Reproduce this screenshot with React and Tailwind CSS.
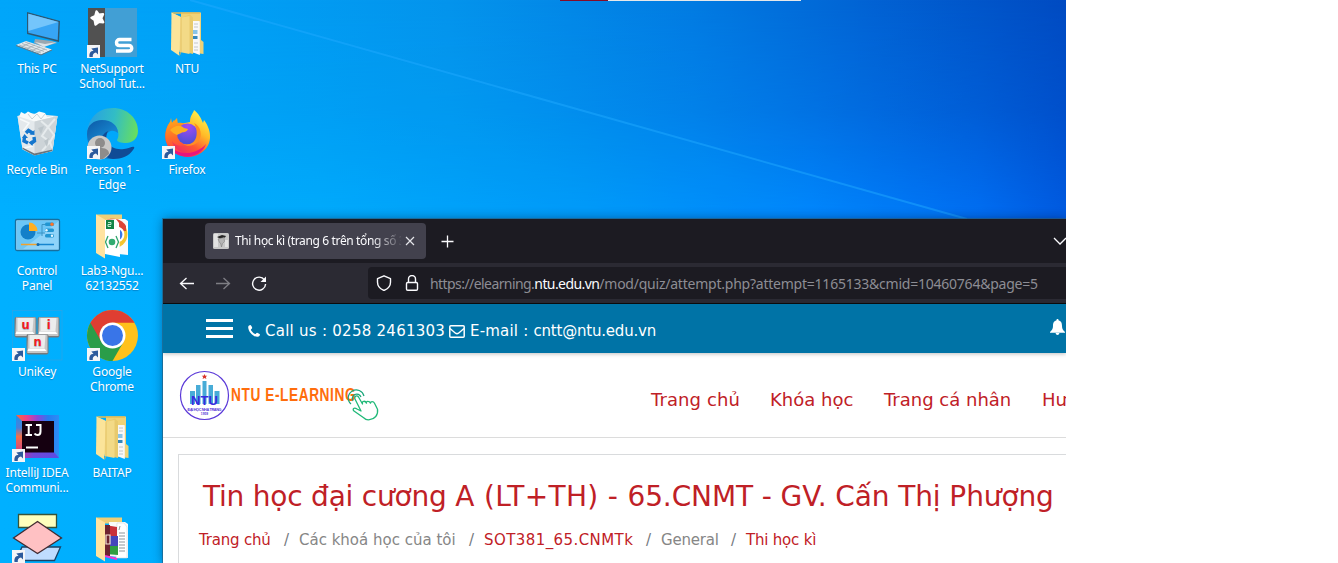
import React from "react";

function Badge() {
  return (
    <g>
      <rect x="12" y="45" width="13" height="13" fill="#f4f5f7" />
      <path d="M14.500 57C14 53 15.500 51 18.500 50.700L16.300 48.500l6.700-1v7l-2-1.900C18.500 53 17.500 54.500 17.800 57z" fill="#2c5a9c" />
    </g>
  );
}

function Icon({ children }) {
  return <svg className="block h-[61px] w-[75px]" viewBox="0 0 75 61">{children}</svg>;
}

function ThisPC() {
  return (
    <Icon>
      <path d="M35 39l17 2 5 2-14 4-9-4z" fill="#9aa7b0" />
      <path d="M35 42l10 2 12-2-13 5z" fill="#dce4e9" />
      <path d="M27 12l33 9-1 21-32-8z" fill="#2d5873" />
      <path d="M28.300 13.800l30.200 8.200-.8 18-29.400-7.200z" fill="#37a5f5" />
      <path d="M28.300 13.800l30.200 8.200-30.200 9z" fill="#74c5fb" />
      <path d="M16 45l10-4 26 8.500-11 5z" fill="#e3e8eb" />
      <path d="M16 45v1l25 9.500 11-5v-1l-11 5z" fill="#66747d" />
      <path d="M19 45l22 8M22 43.500l22 8M25 42l22 8M21 47l9-4M26 49l9-4M31 51l9-4M36 53l9-4" stroke="#99a6ae" strokeWidth=".7" fill="none" />
    </Icon>
  );
}

function NetSupport() {
  return (
    <Icon>
      <rect x="13" y="8" width="49" height="49" fill="#419fd5" />
      <rect x="13" y="8" width="17" height="49" fill="#515151" />
      <path d="M21.500 11.500l2.300 3.200 4.200-.4-1.800 4 2 4-4.200-.6-3.500 2.800-.8-4.500-3.200-2.200 3.800-1.800z" fill="#fff" stroke="#fff" strokeWidth="2.400" strokeLinejoin="round" />
      <path d="M56.500 39.500H44.500a3 3 0 0 0-3 3c0 2 1.500 3 3 3h9.500a2.700 2.700 0 0 1 0 5.500H41" fill="none" stroke="#fff" strokeWidth="3.400" />
      <Badge />
    </Icon>
  );
}

function Folder() {
  return (
    <Icon>
      <path d="M31 12.500h20V40l2.500 2v12L31 51z" fill="#efd277" />
      <path d="M42 21h7l.8.500V55l-7.800-3z" fill="#f8f8f8" />
      <path d="M44 24h4M44 27h4M44 43h4M44 47h4M44 50h4" stroke="#b5babe" strokeWidth=".8" />
      <rect x="43" y="30" width="4.500" height="4" fill="#8ac4e6" />
      <rect x="43" y="36" width="4.500" height="3" fill="#3788bb" />
      <path d="M31 18l9-3.500 3 3V54l-12-3z" fill="#e8ca6c" />
      <path d="M21.500 12.500l10 5 8-1.500V54l-10-2z" fill="#f3da87" />
      <path d="M21.500 12.500L31 17l-2 38.500L21 50z" fill="#fbe49a" />
      <path d="M21.500 12.300H50v1.500H24z" fill="#e6bc55" />
      <path d="M29.500 55.500l1.500-4v-34" fill="none" stroke="#dfbb5a" strokeWidth=".8" />
    </Icon>
  );
}

function OpenFolder({ children }) {
  return (
    <Icon>
      <path d="M21 12.500h26v6H30v35l-9-3z" fill="#efce76" />
      <path d="M34 17l16 0 3 2v34l-19-2z" fill="#f8fafb" />
      {children}
      <path d="M21 12.500l9 5V56.500L21 51z" fill="#ffe3a0" />
    </Icon>
  );
}

function LabFolder() {
  return (
    <OpenFolder>
      <circle cx="38" cy="32" r="14.500" fill="#f4c430" />
      <path d="M30 19a15 15 0 0 1 21 5v5H41l-11-7z" fill="#dc4437" />
      <path d="M44 26a7 7 0 0 1 0 13z" fill="#3b78e7" stroke="#fff" strokeWidth="2" />
      <path d="M30 18l11-1 3 4 1 34-15-3z" fill="#fff" />
      <rect x="31" y="18" width="8" height="9" fill="#128447" />
      <path d="M33 20.500h3v2h-3v2h3M39 20h2v5" fill="none" stroke="#eafff0" strokeWidth=".8" />
      <circle cx="37" cy="40" r="3.300" fill="#32ab70" />
      <path d="M33 34l-2.500 6 2.500 6M41 34l2.500 6-2.500 6" fill="none" stroke="#31a56d" strokeWidth="1.300" />
    </OpenFolder>
  );
}

function RarFolder() {
  return (
    <OpenFolder>
      <path d="M42 18h7l3 4v31H41z" fill="#fff" stroke="#d2d8dd" strokeWidth=".6" />
      <path d="M45 21l-1 4M44 28h6M44 31h6M44 34h6M44 37h6M44 40h6M44 43h6M44 46h6" stroke="#707a82" strokeWidth=".8" />
      <path d="M30 20l12 2v10l-12-1z" fill="#c9303a" />
      <path d="M30 31h13v10H30z" fill="#4545bb" />
      <path d="M30 41h13v9l-13-1z" fill="#2f9d41" />
      <path d="M30 20h5v31h-5z" fill="#6e2430" />
      <path d="M31 30h4v9h-4z" fill="none" stroke="#f4e8d8" strokeWidth="1.200" />
      <path d="M30 51l12 3" stroke="#f536cf" strokeWidth="2" fill="none" />
    </OpenFolder>
  );
}

function RecycleBin() {
  return (
    <Icon>
      <path d="M17.500 15l10-3 30 3-5 35-18 4.500-12-6z" fill="#d9e3e9" />
      <path d="M19 16l2-5 4 2 3-2.500 6 3 5-3 6 1.500 2 4 6-1 2 3-10 3-11 1z" fill="#f8fafa" />
      <path d="M28 13l4 5 5-5 4 5 4-5" stroke="#c4cdd2" strokeWidth=".9" fill="none" />
      <path d="M17.500 15l17 5.500 23-5.500-5 35-18 4-12-6z" fill="#e4e9ec" />
      <path d="M34.500 20.500l23-5.500-5 35-18 4z" fill="#cdd4d8" />
      <path d="M41 20l7 6-6 9 8 6-8 9M55 18l-7 8 6 8-4 7 2 6" stroke="#e6ebed" strokeWidth="2" fill="none" />
      <path d="M38 27l6-2-3 8zM44 40l5-3-2 9z" fill="#bcc5ca" />
      <path d="M20 18l9 4-6 8M24 47l9-2" stroke="#f7fafb" strokeWidth="1.500" fill="none" />
      <path d="M22.500 48l12 6.500 18-4.500v-1.500l-18 4-12-6z" fill="#68747b" />
      <g fill="none" stroke="#1576cd" strokeWidth="3.400">
        <path d="M26 32l2.500-2.500 4 2.500M34 36l.5 4-3.500 2.500M28 42l-4-2 .5-4" />
      </g>
      <path d="M34.500 29v5l-5-.5zM32.500 39v6l-4-3.500zM22 37l2.500-4 3.500 4z" fill="#1576cd" />
    </Icon>
  );
}

function Edge() {
  return (
    <Icon>
      <defs>
        <linearGradient id="eg1" x1="12" y1="20" x2="63" y2="30" gradientUnits="userSpaceOnUse"><stop stopColor="#279fe4" /><stop offset=".5" stopColor="#32bdc5" /><stop offset="1" stopColor="#69df5d" /></linearGradient>
        <linearGradient id="eg2" x1="13" y1="20" x2="40" y2="57" gradientUnits="userSpaceOnUse"><stop stopColor="#0d5ba8" /><stop offset=".5" stopColor="#1683cc" /><stop offset="1" stopColor="#127bcb" /></linearGradient>
      </defs>
      <path d="M12 33C13 18 22 7 38 7c14 0 25 10 25 23 0 8-6 12-12 12-5 0-9-1-9-3 2-3 3-12-5-16-9-4-19-1-25 10z" fill="url(#eg1)" />
      <path d="M12 33c0-9 7-14 15-14 10 0 16 6 16 13-8-6-14 1-12 9 2 8 9 14 16 15-20 7-35-5-35-23z" fill="url(#eg2)" />
      <path d="M33 30c-5 9 2 20 16 18 5 0 8-3 10-2 .8.500 0 1.700-1 3-4 6-11 9-20 9-16-2-17-22-5-28z" fill="#104b96" />
    <Badge />
      <circle cx="24.500" cy="46.500" r="12" fill="#cbc9c7" />
      <circle cx="25" cy="42" r="5" fill="#8e8c8b" />
      <path d="M16 54c0-6 4-7 9-7s9 1 9 6l-6 5h-8z" fill="#8e8c8b" />
      <Badge />
    </Icon>
  );
}

function Firefox() {
  return (
    <Icon>
      <defs>
        <linearGradient id="ff" x1="53" y1="12" x2="24" y2="54" gradientUnits="userSpaceOnUse"><stop stopColor="#fff44f" /><stop offset=".35" stopColor="#ffbb27" /><stop offset=".65" stopColor="#ff5632" /><stop offset="1" stopColor="#e91b78" /></linearGradient>
        <linearGradient id="fo" x1="22" y1="20" x2="30" y2="53" gradientUnits="userSpaceOnUse"><stop stopColor="#ffa21c" /><stop offset=".5" stopColor="#ff6a2a" /><stop offset="1" stopColor="#ff3850" /></linearGradient>
        <radialGradient id="fp" cx="38" cy="25" r="17" gradientUnits="userSpaceOnUse"><stop stopColor="#a44af5" /><stop offset="1" stopColor="#4e50d8" /></radialGradient>
      </defs>
      <path d="M40 21c0-7 3-8 4-12 5 4 7 8 9 13l1-3c9 12 8 26-3 33-12 8-29 3-34-9-4-9 0-18 3-22v4l4-6 1 5z" fill="url(#ff)" />
      <path d="M20 21l1-4 1 5 5-5 .8 5c3-1 7 0 9 3L42 41c-8 5-17 5-20-1 3 14 20 14 29 7-6 11-30 10-34-4-4-9 0-18 3-22z" fill="url(#fo)" />
      <circle cx="37.500" cy="33" r="10.500" fill="url(#fp)" />
      <path d="M20 29c4-4 10-6 14-2l4 1c-1 3-4 3-6 3.500-2 1.500-3 1-5 2.500-3-1-5-3-7-5z" fill="#ffad20" />
      <path d="M44 22c7 3 9 13 4 19-4 4-11 5-15 2 13 3 17-10 11-21z" fill="#ff8d24" />
      <path d="M18 43c8 11 27 13 38 0-5 15-30 18-38 0z" fill="#e8157f" />
      <Badge />
    </Icon>
  );
}

function ControlPanel() {
  return (
    <Icon>
      <rect x="15.500" y="17.500" width="44" height="31" rx="1.500" fill="#8ed3f9" stroke="#176f9f" strokeWidth="1.300" />
      <path d="M17 19h42L23 47h-6z" fill="#6cc6f6" />
      <circle cx="28" cy="30" r="7.500" fill="#1480c9" />
      <path d="M29 29V20.500a8.500 8.500 0 0 1 8.500 8.500z" fill="#ffaf22" />
      <path d="M37 31h5v-8.500h3M42 31h3M42 31v3" fill="none" stroke="#3a94c5" strokeWidth="1" />
      <rect x="45" y="20.500" width="9" height="3.500" rx="1.500" fill="#2196d2" />
      <rect x="45" y="26.500" width="9" height="3.500" rx="1.500" fill="#2196d2" />
      <rect x="45" y="32" width="9" height="3.500" rx="1.500" fill="#2196d2" />
      <circle cx="52" cy="22.300" r="1.700" fill="#ff7328" />
      <circle cx="46.500" cy="28.300" r="1.200" fill="#e5f7ff" />
      <circle cx="52" cy="33.800" r="1.200" fill="#e5f7ff" />
      <path d="M21 42.500h17" stroke="#f1a22c" strokeWidth="1.500" />
      <path d="M37 42.500h17" stroke="#1685cf" strokeWidth="1.500" />
      <circle cx="38" cy="42.500" r="1.500" fill="#1268ab" />
    </Icon>
  );
}

function Key({ x, y, letter }) {
  return (
    <g transform={`translate(${x} ${y})`}>
      <rect width="22" height="20.500" rx="2" fill="#77797b" />
      <path d="M1.500.5h19.500v18.500H.8z" fill="#c5c6c7" />
      <path d="M3 1h16l-1 13H3z" fill="#ededed" />
      <path d="M2 14.500h16l2 2.500H1z" fill="#fff" />
      <text x="11" y="12" textAnchor="middle" fontFamily="DejaVu Sans" fontWeight="bold" fontSize="11.500" fill="#f51b20">{letter}</text>
    </g>
  );
}

function UniKey() {
  return (
    <Icon>
      <rect x="12.500" y="7.500" width="49.500" height="49.500" fill="none" stroke="#34a2e1" strokeWidth=".6" />
      <Key x={14.500} y={14} letter="u" />
      <Key x={37.500} y={14} letter="i" />
      <Key x={26.500} y={31} letter="n" />
      <Badge />
    </Icon>
  );
}

function Chrome() {
  return (
    <Icon>
      <circle cx="37.500" cy="32.500" r="25.500" fill="#ffc11b" />
      <path d="M37.500 32.500L15.420 19.750A25.500 25.500 0 0 0 37.500 58L48.500 38.900z" fill="#2a9d49" />
      <path d="M15.420 19.750A25.500 25.500 0 0 1 59.580 19.750H37.500L26.500 38.900z" fill="#df3e32" />
      <circle cx="37.500" cy="32.500" r="13" fill="#fff" />
      <circle cx="37.500" cy="32.500" r="10.500" fill="#3975e8" />
      <Badge />
    </Icon>
  );
}

function IntelliJ() {
  return (
    <Icon>
      <defs>
        <linearGradient id="ij" x2="1"><stop stopColor="#ff6a30" /><stop offset=".25" stopColor="#f0408a" /><stop offset=".5" stopColor="#8b47d9" /><stop offset=".75" stopColor="#267df0" /><stop offset="1" stopColor="#2d8cf5" /></linearGradient>
        <linearGradient id="ijl" x2="0" y2="1"><stop stopColor="#1e91ec" /><stop offset=".3" stopColor="#4a80d8" /><stop offset=".5" stopColor="#f0704a" /><stop offset="1" stopColor="#c8309a" /></linearGradient>
        <linearGradient id="ijb" x2="1"><stop stopColor="#d0308c" /><stop offset=".4" stopColor="#7048d8" /><stop offset="1" stopColor="#5a4ce5" /></linearGradient>
      </defs>
      <path d="M16 11h43v43H16z" fill="url(#ij)" />
      <path d="M16 11l6 6v31l-6 6z" fill="url(#ijl)" />
      <path d="M16 54l6-6h32l5 6z" fill="url(#ijb)" />
      <rect x="22" y="17" width="32" height="31.500" fill="#150010" />
      <path d="M25.500 21h6.500M28.700 21v10M25.500 31h6.500M36 21h4.500v6.500q0 3.500-3 3.500-1.800 0-3-1.500" fill="none" stroke="#fff" strokeWidth="2" />
      <path d="M26 43.500h12" stroke="#fff" strokeWidth="2" />
      <Badge />
    </Icon>
  );
}

function Diagram() {
  return (
    <Icon>
      <path d="M18.500 9.500h38v13h-38z" fill="#feffbd" stroke="#365439" strokeWidth="1.300" />
      <path d="M22 42h38.500l-6 13.500H16z" fill="#bfdcff" stroke="#1b4265" strokeWidth="1.300" />
      <path d="M37.500 16.500L61.500 33l-24 15.500L13.500 33z" fill="#ffc1c3" stroke="#432c32" strokeWidth="1.300" />
      <Badge />
    </Icon>
  );
}

const columns = [
  [
    [ThisPC, ["This PC"]],
    [RecycleBin, ["Recycle Bin"]],
    [ControlPanel, ["Control", "Panel"]],
    [UniKey, ["UniKey"]],
    [IntelliJ, ["IntelliJ IDEA", "Communi..."]],
    [Diagram, []],
  ],
  [
    [NetSupport, ["NetSupport", "School Tut..."]],
    [Edge, ["Person 1 -", "Edge"]],
    [LabFolder, ["Lab3-Ngu...", "62132552"]],
    [Chrome, ["Google", "Chrome"]],
    [Folder, ["BAITAP"]],
    [RarFolder, []],
  ],
  [
    [Folder, ["NTU"]],
    [Firefox, ["Firefox"]],
  ],
];

function Desktop() {
  return (
    <div className="flex">
      {columns.map((items, c) => (
        <div key={c} className="flex w-[75px] flex-col">
          {items.map(([Pic, label], i) => (
            <div key={i} className="h-[101px] w-[75px] text-center text-[12px] leading-[15px] tracking-[-0.2px] text-white [text-shadow:0_1px_1px_rgba(0,60,120,0.35)]">
              <Pic />
              {label.map((l) => (
                <div key={l} className="-ml-px whitespace-nowrap">{l}</div>
              ))}
            </div>
          ))}
        </div>
      ))}
    </div>
  );
}

function Wallpaper() {
  return (
    <svg className="absolute inset-0 h-[563px] w-[1066px]" viewBox="0 0 1066 563">
      <defs>
        <linearGradient id="sky" gradientUnits="userSpaceOnUse" x1="0" y1="0" x2="1066" y2="0">
          <stop stopColor="#00a6fa" />
          <stop offset=".2" stopColor="#01a0f6" />
          <stop offset=".42" stopColor="#0494ec" />
          <stop offset=".65" stopColor="#027be2" />
          <stop offset=".82" stopColor="#0262d3" />
          <stop offset="1" stopColor="#004bc2" />
        </linearGradient>
        <linearGradient id="low" gradientUnits="userSpaceOnUse" x1="0" y1="0" x2="1066" y2="0">
          <stop stopColor="#00b0ff" />
          <stop offset=".3" stopColor="#00abfc" />
          <stop offset=".55" stopColor="#009bfa" />
          <stop offset=".76" stopColor="#0086ff" />
          <stop offset=".92" stopColor="#006ff4" />
          <stop offset="1" stopColor="#005be2" />
        </linearGradient>
        <linearGradient id="fade" gradientUnits="userSpaceOnUse" x1="0" y1="0" x2="0" y2="225">
          <stop stopColor="#fff" stopOpacity="0" />
          <stop offset=".5" stopColor="#fff" stopOpacity=".3" />
          <stop offset="1" stopColor="#fff" />
        </linearGradient>
        <mask id="m"><rect width="1066" height="563" fill="url(#fade)" /></mask>
      </defs>
      <rect width="1066" height="563" fill="url(#sky)" />
      <rect width="1066" height="563" fill="url(#low)" mask="url(#m)" />
      <path d="M190 0L967 219H190z" fill="#00a8ff" fillOpacity=".06" />
      <path d="M190 0L967 219" stroke="#20a9ff" strokeOpacity=".5" strokeWidth="2" />
    </svg>
  );
}

function TabStrip() {
  return (
    <div className="flex h-11 items-center bg-[#1c1b22] pl-[42px] text-[#fbfbfe]">
      <div className="flex h-9 w-[221px] shrink-0 items-center rounded bg-[#42414d] pl-2">
        <svg className="size-4 shrink-0" viewBox="0 0 16 16">
          <rect width="16" height="16" rx="1.500" fill="#c8c8c8" />
          <path d="M1 1h4v13H1zM12 7h3v7h-3z" fill="#e2e2e2" />
          <path d="M4 4l5-2 4 1-1 1.500-5 1z" fill="#252525" />
          <path d="M5 6l6-1.500.5 4-2 2-1 3.500-1-4-1-.5z" fill="#b5b5b5" stroke="#777" strokeWidth=".5" />
        </svg>
        <div className="ml-[6px] w-[166px] overflow-hidden whitespace-nowrap text-[12px] tracking-[-0.36px] [mask-image:linear-gradient(to_right,#000_82%,transparent_102%)]">
          Thi học kì (trang 6 trên tổng số 3
        </div>
        <svg className="ml-[3px] size-3 shrink-0" viewBox="0 0 12 12"><path d="M2 2l8 8M10 2l-8 8" stroke="#e5e5ea" strokeWidth="1.200" /></svg>
      </div>
      <svg className="ml-[15px] size-[13px] shrink-0" viewBox="0 0 13 13"><path d="M6.500 .5v12M.5 6.500h12" stroke="#fbfbfe" strokeWidth="1.300" /></svg>
      <svg className="ml-[599px] h-3 w-[14px] shrink-0" viewBox="0 0 14 12"><path d="M1 3l6 6 6-6" fill="none" stroke="#fbfbfe" strokeWidth="1.300" /></svg>
    </div>
  );
}

function Toolbar() {
  return (
    <div className="flex h-[41px] items-center border-b border-[#0c0c0d] bg-[#2b2a33] pl-4 text-[#fbfbfe]">
      <svg className="h-4 w-4 shrink-0" viewBox="0 0 16 16"><path d="M15 8.500H1.500M7.500 3l-6 5.500 6 5.500" fill="none" stroke="currentColor" strokeWidth="1.300" /></svg>
      <svg className="ml-5 h-4 w-4 shrink-0 opacity-40" viewBox="0 0 16 16"><path d="M1 8.500h13.500M8.500 3l6 5.500-6 5.500" fill="none" stroke="currentColor" strokeWidth="1.300" /></svg>
      <svg className="ml-5 h-4 w-4 shrink-0" viewBox="0 0 16 16"><path d="M13.500 5A6.500 6.500 0 1 0 14.600 9" fill="none" stroke="currentColor" strokeWidth="1.400" /><path d="M15 1.500v5.500H9.500z" fill="currentColor" /></svg>
      <div className="ml-[101px] flex h-8 w-[720px] shrink-0 items-center rounded-l bg-[#1c1b22] pl-2">
        <svg className="size-4 shrink-0" viewBox="0 0 16 16"><path d="M8 .8l6.500 2.900v3.500c0 4-2.500 6.600-6.500 8.300-4-1.700-6.500-4.300-6.500-8.300V3.700z" fill="none" stroke="currentColor" strokeWidth="1.400" strokeLinejoin="round" /></svg>
        <svg className="ml-3 size-4 shrink-0" viewBox="0 0 16 16"><rect x="2.500" y="7.500" width="11" height="7.800" rx="1.200" fill="none" stroke="currentColor" strokeWidth="1.400" /><path d="M4.500 7.500V4a3.500 3.500 0 0 1 7 0v3.500" fill="none" stroke="currentColor" strokeWidth="1.400" /></svg>
        <div className="ml-[10px] whitespace-nowrap text-[14px] tracking-[-0.23px] text-[#8d8d94]">
          <span className="tracking-[-0.57px]">https://elearning.</span><span className="tracking-[-0.58px] text-[#fbfbfe]">ntu.edu.vn</span>/mod/quiz/attempt.php?attempt=1165133&amp;cmid=10460764&amp;page=5
        </div>
      </div>
    </div>
  );
}

function ContactBar() {
  return (
    <div className="relative z-10 flex h-[49px] items-center whitespace-nowrap bg-[#0073a6] pl-[43px] font-['DejaVu_Sans',sans-serif] text-[15px] text-white shadow-[0_1px_4px_rgba(0,0,0,0.25)]">
      <div className="flex w-[27px] shrink-0 flex-col gap-[5px]">
        <div className="h-[3px] bg-white" />
        <div className="h-[3px] bg-white" />
        <div className="h-[3px] bg-white" />
      </div>
      <div className="flex items-center pt-[5px]">
        <svg className="ml-[15px] h-3 w-3 shrink-0" viewBox="0 0 12 12"><path d="M.2 2.200C0 1 1.500 0 2.500 0c.5 0 1.800 2.600 1.700 3-.2.800-1.400 1.300-1.300 1.800.2 1.200 3.100 4.100 4.300 4.300.5.100 1.100-1.300 1.900-1.400.4 0 2.900 1.400 2.900 1.800 0 1-1 2.300-2.200 2.300C5 12 .4 6.700.2 2.200z" fill="#fff" /></svg>
        <span className="ml-[5px] w-[184px] shrink-0 tracking-[0.26px]">Call us : 0258 2461303</span>
        <svg className="h-[13px] w-4 shrink-0" viewBox="0 0 16 13"><rect x=".8" y=".8" width="14.400" height="11.400" rx="1" fill="none" stroke="#fff" strokeWidth="1.500" /><path d="M1 3.500l5.500 4.700q1.500 1 3 0L15 3.500" fill="none" stroke="#fff" strokeWidth="1.400" /></svg>
        <span className="ml-[5px] w-[580px] shrink-0"><span className="tracking-[0.2px]">E-mail : </span><span className="tracking-[-0.2px]">cntt@ntu.edu.vn</span></span>
      </div>
      <svg className="-mt-1 h-4 w-[15px] shrink-0" viewBox="0 0 15 16"><path d="M7.500 0c.8 0 1 .6 1 1.200C11.500 2 12 4.500 12 7c0 3 1.200 4.500 3 6v.7H0V13c1.800-1.500 3-3 3-6 0-2.500.5-5 3.500-5.800C6.500.6 6.700 0 7.500 0zM5.500 14h4q-.5 2-2 2t-2-2z" fill="#fff" /></svg>
    </div>
  );
}

function Logo() {
  return (
    <svg className="h-[60px] w-[205px] shrink-0" viewBox="0 0 205 60">
      <circle cx="26.500" cy="30.500" r="24" fill="#fff" stroke="#5a38d8" strokeWidth="1.200" />
      <path d="M12 26h5v13h-5zM18 20h4.500v19H18zM24.500 16h4v23h-4zM30.500 20H35v19h-4.500zM36.500 26h5v13h-5z" fill="#48acd7" />
      <path d="M26.500 9l.8 1.700h2l-1.500 1.300.6 2-1.900-1.100-1.900 1.100.6-2-1.500-1.300h2z" fill="#d9352b" />
      <text x="26.500" y="39.500" textAnchor="middle" textLength="27" fontFamily="Liberation Sans" fontSize="13" fontWeight="bold" fill="#382be0">NTU</text>
      <text x="26.500" y="45.500" textAnchor="middle" textLength="34" fontFamily="Liberation Sans" fontSize="3.800" fontWeight="bold" fill="#5738d8">ĐẠI HỌC NHA TRANG</text>
      <text x="26.500" y="50" textAnchor="middle" fontFamily="Liberation Sans" fontSize="3.300" fontWeight="bold" fill="#5738d8">1959</text>
      <text transform="translate(53 36) scale(.72 1)" textLength="173" fontFamily="Liberation Sans" fontSize="19" fontWeight="bold" fill="#ff6d0c">NTU E-LEARNING</text>
      <path d="M186 53l-10-7c-2-2 0-4 3-2l4 2-6-12c-1-3 2-4 3.500-2l4 7c-1-3.500 3-3.500 4-.8-1-2.500 3-2.500 4 0 0-2 3-2 4 0l3 6c1 6-3 10-8 10.500-2 .3-4 0-5.500-1.700z" fill="#fff" stroke="#20b978" strokeWidth="1.300" strokeLinejoin="round" />
      <path d="M175 36a4.500 4.500 0 1 1 8-4M173 39a8 8 0 1 1 13-8" fill="none" stroke="#1ba77b" strokeWidth="1.200" />
    </svg>
  );
}

function Page() {
  return (
    <div className="h-[210px] bg-white font-['DejaVu_Sans',sans-serif] text-[#bf2026]">
      <div className="flex h-[85px] items-center border-b border-[#dcdcdc] pl-[15px]">
        <Logo />
        <nav className="ml-[268px] mt-2 flex shrink-0 whitespace-nowrap text-[18px]">
          <span className="w-[119px] tracking-[0.1px]">Trang chủ</span>
          <span className="w-[114px]">Khóa học</span>
          <span className="w-[158px]">Trang cá nhân</span>
          <span>Hướng dẫn</span>
        </nav>
      </div>
      <div className="ml-[15px] mt-4 h-[130px] w-[1000px] border border-[#d9dbdd] pt-[23px]">
        <h1 className="ml-6 whitespace-nowrap text-[28px] leading-[38px]">
          <span className="tracking-[-0.22px]">Tin học đại cương </span>
          <span className="tracking-[0.33px]">A (LT+TH) - </span>
          <span className="tracking-[-0.1px]">65.CNMT - GV. Cấn Thị Phượng</span>
        </h1>
        <div className="ml-5 mt-[14px] flex whitespace-nowrap text-[15px] leading-5">
          <span className="w-[85px] tracking-[-0.2px]">Trang chủ</span>
          <span className="w-[15px] text-[#747a80]">/</span>
          <span className="w-[170px] text-[#868686]">Các khoá học của tôi</span>
          <span className="w-[15px] text-[#747a80]">/</span>
          <span className="w-[162px] tracking-[0.42px]">SOT381_65.CNMTk</span>
          <span className="w-[15px] text-[#747a80]">/</span>
          <span className="w-[70px] tracking-[-0.2px] text-[#868686]">General</span>
          <span className="w-[15px] text-[#747a80]">/</span>
          <span className="tracking-[-0.2px]">Thi học kì</span>
        </div>
      </div>
    </div>
  );
}

export default function App() {
  return (
    <div className="h-[563px] w-full overflow-hidden bg-white font-['Noto_Sans',sans-serif]">
      <div className="relative h-[563px] w-[1066px] overflow-hidden">
        <Wallpaper />
        <div className="absolute left-[560px] top-0 flex h-px w-[241px] bg-[#e6e8ea]">
          <div className="h-px w-12 bg-[#850b28]" />
        </div>
        <div className="relative"><Desktop /></div>
        <div className="absolute left-[163px] top-[219px] h-[344px] w-[903px] shadow-[0_0_0_1px_rgba(40,90,120,0.6),0_0_10px_rgba(0,20,50,0.45)]">
          <div className="h-[344px] overflow-hidden">
            <TabStrip />
            <Toolbar />
            <ContactBar />
            <Page />
          </div>
        </div>
      </div>
    </div>
  );
}
